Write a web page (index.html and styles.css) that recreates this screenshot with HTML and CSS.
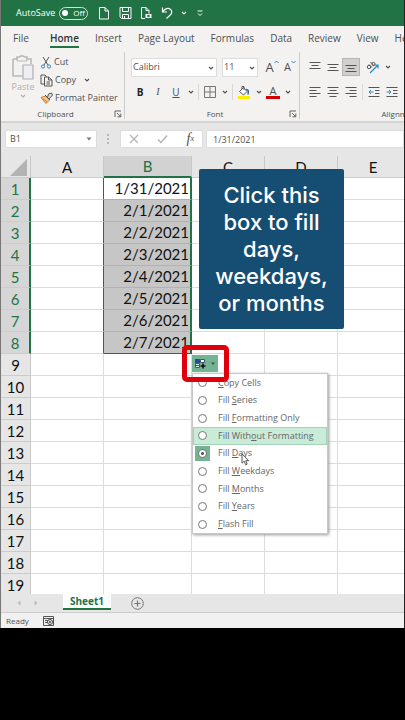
FILE: index.html
```html
<!DOCTYPE html>
<html lang="en">
<head>
<meta charset="utf-8">
<meta name="viewport" content="width=device-width, initial-scale=1">
<title>Sheet1</title>
<link rel="stylesheet" href="styles.css">
</head>
<body>
<svg class="defs" aria-hidden="true">
  <symbol id="chev" viewBox="0 0 6 6"><path d="M1 2l2 2 2-2" fill="none" stroke="currentColor" stroke-width="1.1"/></symbol>
  <symbol id="launch" viewBox="0 0 8 8"><path d="M1 7V1h6M3 3l3.500 3.500M6.800 3.500v3.300H3.500" fill="none" stroke="#555" stroke-width=".9"/></symbol>
</svg>
<main class="app">
  <header class="title">
    <span class="autosave">AutoSave</span>
    <button class="toggle" aria-label="AutoSave off"><i></i>Off</button>
    <button class="tool" aria-label="New"><svg width="12" height="14" viewBox="0 0 12 14"><path d="M1.500 1.500h5.500l3.500 3.500v8h-9zM7 1.500v3.500h3.500" fill="none" stroke="#fff"/></svg></button>
    <button class="tool" aria-label="Save"><svg width="13" height="14" viewBox="0 0 13 14"><path d="M1 1.500h11v11H2.500L1 11zM3.500 1.500v4h6v-4M3.500 12.500v-4h6v4M5.500 10v2.500" fill="none" stroke="#fff"/></svg></button>
    <button class="tool" aria-label="Print preview"><svg width="13" height="14" viewBox="0 0 13 14"><path d="M5 12.500H1.500v-11H6l3 3v3M6 1.500v3h3" fill="none" stroke="#fff"/><path d="M5.500 8h6v4h-6z" fill="#fff"/><circle cx="8.500" cy="10" r="1.300" fill="#217346"/></svg></button>
    <button class="tool" aria-label="Undo"><svg width="13" height="14" viewBox="0 0 13 14"><path d="M1.500 1.500v4.500H6M1.800 5.800C4 2.500 7 1.500 9.300 3.200c2.500 2 1.500 4.500-.3 6L5.500 12.500" fill="none" stroke="#fff" stroke-width="1.200"/></svg></button>
    <button class="more" aria-label="Undo list"><svg width="6" height="6"><use href="#chev"/></svg></button>
    <button class="more custom" aria-label="Customize toolbar"><svg width="6" height="7" viewBox="0 0 6 7"><path d="M.5 1h5M1 3.500l2 2 2-2" fill="none" stroke="#fff"/></svg></button>
  </header>
  <nav class="tabs">
    <a class="file" href="#file">File</a><a class="on" href="#home">Home</a><a href="#insert">Insert</a><a href="#layout">Page Layout</a><a href="#formulas">Formulas</a><a href="#data">Data</a><a href="#review">Review</a><a href="#view">View</a><a href="#help">Help</a>
  </nav>
  <section class="ribbon">
    <div class="group clipboard">
      <div class="clip-body">
        <button class="paste"><svg width="24" height="26" viewBox="0 0 24 26"><path d="M2 4h4V2h2.500C9 .5 13 .5 13.500 2H16v2h4v5M2 4v17h9" fill="none" stroke="#b9b9b9" stroke-width="1.600"/><path d="M6 2v4h10V2" fill="none" stroke="#b9b9b9"/><path d="M12 10h10v14H12z" fill="#eeeef2" stroke="#b0b0b4" stroke-width="1.200"/></svg>Paste<svg width="6" height="6"><use href="#chev"/></svg></button>
        <div class="clip-list">
          <button><svg width="12" height="13" viewBox="0 0 12 13"><path d="M3 1l5 8M9 1L4 9" stroke="#555" fill="none"/><circle cx="3" cy="10.500" r="1.600" fill="none" stroke="#2b88c8"/><circle cx="9" cy="10.500" r="1.600" fill="none" stroke="#2b88c8"/></svg>Cut</button>
          <button><svg width="13" height="13" viewBox="0 0 13 13"><path d="M4 10H1V1h4l1.500 1.500M4.500 3h4L12 6v6H4.500zM8.500 3v3H12M6.500 8h3.500M6.500 10h3.500" fill="none" stroke="#555"/></svg>Copy<svg class="after" width="6" height="6"><use href="#chev"/></svg></button>
          <button><svg width="13" height="12" viewBox="0 0 13 12"><path d="M1 5.500l4.500-1.500 4 4L6 11.500z" fill="#f7c493" stroke="#e07b20"/><path d="M3 6.500l4 3.500" stroke="#e07b20"/><path d="M5 3l5 5M7.500 5.500L8.500 2l3-1 1 2-3.500 4z" fill="#ddd" stroke="#555"/></svg>Format Painter</button>
        </div>
      </div>
      <footer>Clipboard<svg width="8" height="8"><use href="#launch"/></svg></footer>
    </div>
    <div class="group font">
      <div class="row">
        <label class="drop family"><select aria-label="Font"><option>Calibri</option></select><svg width="6" height="6"><use href="#chev"/></svg></label>
        <label class="drop size"><select aria-label="Font size"><option>11</option></select><svg width="6" height="6"><use href="#chev"/></svg></label>
        <button class="grow" aria-label="Increase font size">A<svg width="5" height="4" viewBox="0 0 5 4"><path d="M.5 3l2-2 2 2" fill="none" stroke="#2b88c8"/></svg></button>
        <button class="grow less" aria-label="Decrease font size">A<svg width="5" height="4" viewBox="0 0 5 4"><path d="M.5 1l2 2 2-2" fill="none" stroke="#2b88c8"/></svg></button>
      </div>
      <div class="row">
        <button class="ic b">B</button><button class="ic i">I</button><button class="ic u">U</button><button class="dd" aria-label="Underline styles"><svg width="6" height="6"><use href="#chev"/></svg></button><hr>
        <button class="ic" aria-label="Borders"><svg width="12" height="12" viewBox="0 0 12 12"><path d="M.5.5h11v11H.5zM6 .5v11M.5 6h11" fill="none" stroke="#777"/></svg></button><button class="dd" aria-label="Border list"><svg width="6" height="6"><use href="#chev"/></svg></button><hr>
        <button class="ic" aria-label="Fill color"><svg width="14" height="13" viewBox="0 0 14 13"><path d="M1 10h12v3H1z" fill="#ffed00"/><path d="M2.500 5.500l4-4 3.500 4-3.500 3.500zM5 3V.5h2V4" fill="#fff" stroke="#555"/><path d="M9 3.500c3 0 2.500 2 2 5" fill="none" stroke="#2b6cae" stroke-width="1.500"/></svg></button><button class="dd" aria-label="Fill colors"><svg width="6" height="6"><use href="#chev"/></svg></button>
        <button class="ic color" aria-label="Font color">A</button><button class="dd" aria-label="Font colors"><svg width="6" height="6"><use href="#chev"/></svg></button>
      </div>
      <footer>Font<svg width="8" height="8"><use href="#launch"/></svg></footer>
    </div>
    <div class="group align">
      <div class="row">
        <button class="ic" aria-label="Top align"><svg width="12" height="12" viewBox="0 0 12 12"><path d="M.5 1.500h11M2.500 4.500h7M.5 7.500h11" stroke="#555"/></svg></button>
        <button class="ic" aria-label="Middle align"><svg width="12" height="12" viewBox="0 0 12 12"><path d="M.5 3.500h11M2.500 6.500h7M.5 9.500h11" stroke="#555"/></svg></button>
        <button class="ic pressed" aria-label="Bottom align"><svg width="12" height="12" viewBox="0 0 12 12"><path d="M.5 4.500h11M2.500 7.500h7M.5 10.500h11" stroke="#555"/></svg></button>
        <button class="ic turn" aria-label="Orientation"><svg width="14" height="13" viewBox="0 0 14 13"><path d="M4 12l8-8M8.500 4H12v3.500" fill="none" stroke="#2b88c8" stroke-width="1.200"/><circle cx="3" cy="6" r="1.700" fill="none" stroke="#555"/><path d="M3 3.500l3 3M4.500 1l3.500 4" fill="none" stroke="#555"/><circle cx="7.500" cy="3" r="1.600" fill="none" stroke="#555"/></svg></button><button class="dd" aria-label="Orientation list"><svg width="6" height="6"><use href="#chev"/></svg></button>
      </div>
      <div class="row">
        <button class="ic" aria-label="Align left"><svg width="12" height="12" viewBox="0 0 12 12"><path d="M.5 1.500h11M.5 4.500h7M.5 7.500h11M.5 10.500h7" stroke="#555"/></svg></button>
        <button class="ic" aria-label="Center"><svg width="12" height="12" viewBox="0 0 12 12"><path d="M.5 1.500h11M2.500 4.500h7M.5 7.500h11M2.500 10.500h7" stroke="#555"/></svg></button>
        <button class="ic" aria-label="Align right"><svg width="12" height="12" viewBox="0 0 12 12"><path d="M.5 1.500h11M4.500 4.500h7M.5 7.500h11M4.500 10.500h7" stroke="#555"/></svg></button><hr>
        <button class="ic" aria-label="Decrease indent"><svg width="12" height="12" viewBox="0 0 12 12"><path d="M.5 1.500h11M7 4.500h4.500M7 7.500h4.500M.5 10.500h11" stroke="#555"/><path d="M5.500 6H1M3 4L1 6l2 2" fill="none" stroke="#2b88c8"/></svg></button>
        <button class="ic" aria-label="Increase indent"><svg width="12" height="12" viewBox="0 0 12 12"><path d="M.5 1.500h11M7 4.500h4.500M7 7.500h4.500M.5 10.500h11" stroke="#555"/><path d="M.5 6H5M3 4l2 2-2 2" fill="none" stroke="#2b88c8"/></svg></button>
      </div>
      <footer>Alignment</footer>
    </div>
  </section>
  <section class="formula">
    <label class="name"><input aria-label="Name box" value="B1"><svg width="6" height="4" viewBox="0 0 6 4"><path d="M.5.5h5L3 3.500z" fill="#777"/></svg></label>
    <svg class="dots" width="2" height="10" viewBox="0 0 2 10"><path d="M0 1h2M0 5h2M0 9h2" stroke="#aaa" stroke-width="1.500"/></svg>
    <div class="fx">
      <button aria-label="Cancel"><svg width="10" height="10" viewBox="0 0 10 10"><path d="M1 1l8 8M9 1L1 9" stroke="#b5b5b5" stroke-width="1.300"/></svg></button>
      <button aria-label="Enter"><svg width="11" height="10" viewBox="0 0 11 10"><path d="M1 5.500L4 8.500l6-7" fill="none" stroke="#b5b5b5" stroke-width="1.500"/></svg></button>
      <button class="fn" aria-label="Insert function">f<small>x</small></button>
    </div>
    <input class="value" aria-label="Formula bar" value="1/31/2021">
  </section>
  <section class="sheet">
    <table>
      <colgroup><col class="num"><col class="c"><col class="cb"><col class="c"><col class="c"><col></colgroup>
      <thead><tr><th class="corner"><svg width="18" height="17" viewBox="0 0 18 17"><path d="M17 0v17H0z" fill="#b3b3b3"/></svg></th><th>A</th><th class="sel">B</th><th>C</th><th>D</th><th>E</th></tr></thead>
      <tbody>
        <tr class="in first"><th>1</th><td></td><td>1/31/2021</td><td></td><td></td><td></td></tr>
        <tr class="in"><th>2</th><td></td><td>2/1/2021</td><td></td><td></td><td></td></tr>
        <tr class="in"><th>3</th><td></td><td>2/2/2021</td><td></td><td></td><td></td></tr>
        <tr class="in"><th>4</th><td></td><td>2/3/2021</td><td></td><td></td><td></td></tr>
        <tr class="in"><th>5</th><td></td><td>2/4/2021</td><td></td><td></td><td></td></tr>
        <tr class="in"><th>6</th><td></td><td>2/5/2021</td><td></td><td></td><td></td></tr>
        <tr class="in"><th>7</th><td></td><td>2/6/2021</td><td></td><td></td><td></td></tr>
        <tr class="in last"><th>8</th><td></td><td>2/7/2021</td><td></td><td></td><td></td></tr>
        <tr><th>9</th><td></td><td></td><td></td><td></td><td></td></tr>
        <tr><th>10</th><td></td><td></td><td></td><td></td><td></td></tr>
        <tr><th>11</th><td></td><td></td><td></td><td></td><td></td></tr>
        <tr><th>12</th><td></td><td></td><td></td><td></td><td></td></tr>
        <tr><th>13</th><td></td><td></td><td></td><td></td><td></td></tr>
        <tr><th>14</th><td></td><td></td><td></td><td></td><td></td></tr>
        <tr><th>15</th><td></td><td></td><td></td><td></td><td></td></tr>
        <tr><th>16</th><td></td><td></td><td></td><td></td><td></td></tr>
        <tr><th>17</th><td></td><td></td><td></td><td></td><td></td></tr>
        <tr><th>18</th><td></td><td></td><td></td><td></td><td></td></tr>
        <tr><th>19</th><td></td><td></td><td></td><td></td><td></td></tr>
      </tbody>
    </table>
    <p class="callout">Click this<br>box to fill<br>days,<br>weekdays,<br>or months</p>
    <form class="menu">
      <label><input type="radio" name="fill"><span><u>C</u>opy Cells</span></label>
      <label><input type="radio" name="fill"><span>Fill <u>S</u>eries</span></label>
      <label><input type="radio" name="fill"><span>Fill <u>F</u>ormatting Only</span></label>
      <label class="hover"><input type="radio" name="fill"><span>Fill With<u>o</u>ut Formatting</span></label>
      <label class="picked"><input type="radio" name="fill" checked><span>Fill <u>D</u>ays</span></label>
      <label><input type="radio" name="fill"><span>Fill <u>W</u>eekdays</span></label>
      <label><input type="radio" name="fill"><span>Fill <u>M</u>onths</span></label>
      <label><input type="radio" name="fill"><span>Fill <u>Y</u>ears</span></label>
      <label><input type="radio" name="fill"><span><u>F</u>lash Fill</span></label>
    </form>
    <div class="ring"><button aria-label="Auto fill options"><svg width="26" height="18" viewBox="0 0 26 18"><path d="M3 4h5v4H3z" fill="#1e4e9c"/><path d="M8.500 4.500h4v3h-4z" fill="#fff" stroke="#456"/><path d="M3.500 8.500h4v4h-4zM3 10.500h5" fill="#dfeee6" stroke="#456"/><path d="M11 8.500v5M8.500 11h5" stroke="#111" stroke-width="1.600"/><path d="M19 7.500h4l-2 2.500z" fill="#345c49"/></svg></button></div>
    <svg class="cursor" width="9" height="13" viewBox="0 0 9 13"><path d="M1 .8v9.400l2.200-2 1.500 3.600 1.500-.7-1.500-3.400h3z" fill="#fff" stroke="#444" stroke-width=".9"/></svg>
  </section>
  <nav class="sheets">
    <button class="arrow" aria-label="Previous sheet"><svg width="4" height="6" viewBox="0 0 4 6"><path d="M3.500.5v5L.5 3z" fill="#bbb"/></svg></button>
    <button class="arrow" aria-label="Next sheet"><svg width="4" height="6" viewBox="0 0 4 6"><path d="M.5.5v5L3.500 3z" fill="#bbb"/></svg></button>
    <a href="#sheet1">Sheet1</a>
    <button class="add" aria-label="New sheet"><svg width="13" height="13" viewBox="0 0 13 13"><circle cx="6.500" cy="6.500" r="5.800" fill="none" stroke="#777"/><path d="M6.500 3.500v6M3.500 6.500h6" stroke="#777" stroke-width="1.200"/></svg></button>
  </nav>
  <footer class="status">Ready<svg width="11" height="10" viewBox="0 0 11 10"><path d="M.5.500h10v9H.5zM.5 2.500h10M2 4.500h3M2 6.500h2" fill="none" stroke="#555"/><circle cx="7" cy="6" r="2.500" fill="#eee" stroke="#444"/><circle cx="7" cy="6" r="1" fill="#444"/></svg></footer>
</main>
</body>
</html>
```
FILE: styles.css
```css
* { box-sizing: border-box; }
body { margin: 0; background: #000; color: #505050; font: 9px/12px "Open Sans", "Noto Sans", sans-serif; }
button, input, select { margin: 0; padding: 0; border: 0; background: none; color: inherit; font: inherit; }
button { display: flex; align-items: center; justify-content: center; flex: none; }
svg { display: block; flex: none; }
a { color: inherit; text-decoration: none; }
.defs { display: none; }
.app { border-left: 1px solid #777; border-right: 1px solid #222; background: #e6e6e6; overflow: hidden; }

.title { display: flex; align-items: center; height: 26px; padding-left: 15px; background: #217346; color: #fff; }
.autosave { width: 43px; white-space: nowrap; }
.toggle { width: 29px; height: 13px; gap: 5px; margin-right: 8px; border: 1px solid #cfe3d7; border-radius: 7px; font-size: 8px; }
.toggle i { width: 6px; height: 6px; border-radius: 50%; background: #fff; }
.tool { width: 16px; margin-right: 5px; }
.more { width: 8px; }
.custom { margin-left: 8px; }

.tabs { display: flex; gap: 16px; height: 26px; padding: 4px 0 4px 12px; background: #f3f2f0; font-size: 10px; line-height: 16px; white-space: nowrap; overflow: hidden; }
.tabs a { flex: none; }
.file { width: 21px; }
.on { border-bottom: 2px solid #217346; color: #333; font-weight: 600; }

.ribbon { display: flex; height: 71px; background: #f3f2f0; border-bottom: 2px solid #d4d4d4; overflow: hidden; }
.group { display: flex; flex-direction: column; flex: none; position: relative; height: 67px; border-right: 1px solid #ccc; }
.group footer { display: flex; align-items: center; justify-content: center; margin-top: auto; height: 10px; font-size: 8px; line-height: 10px; }
.group footer svg { position: absolute; right: 2px; bottom: 1px; }
.clipboard { width: 124px; }
.clipboard footer { padding-right: 14px; }
.clip-body { display: flex; gap: 5px; padding: 1px 0 0 10px; }
.paste { flex-direction: column; width: 24px; height: 48px; color: #b0b0b0; }
.clip-list { display: flex; flex-direction: column; }
.clip-list button { justify-content: flex-start; gap: 2px; height: 18px; white-space: nowrap; }
.after { margin-left: 6px; }
.font { width: 175px; padding-left: 6px; }
.row { display: flex; align-items: center; height: 30px; }
.row + .row { height: 20px; }
.drop { position: relative; height: 19px; margin-right: 5px; border: 1px solid #ddd; background: #fff; }
.drop select { width: 100%; height: 17px; padding-left: 1px; appearance: none; }
.drop svg { position: absolute; right: 2px; top: 6px; }
.family { width: 86px; }
.size { width: 36px; }
.grow { align-items: flex-start; width: 18px; font-size: 13px; line-height: 14px; }
.less { font-size: 11px; }
.ic { width: 18px; height: 18px; font-size: 10px; }
.b { font-weight: 700; color: #222; }
.i { font-family: "Liberation Serif", serif; font-style: italic; }
.u { text-decoration: underline; }
.dd { width: 11px; height: 18px; }
.row hr { width: 1px; height: 16px; margin: 0 2px; border: 0; background: #d8d8d8; }
.color { width: 14px; height: 13px; margin: 0 2px; border-bottom: 3px solid #d00000; font-size: 11px; line-height: 10px; }
.align { width: 196px; padding-left: 6px; }
.pressed { background: #cfcfcf; border: 1px solid #b5b5b5; }
.turn { margin-left: 4px; }

.formula { display: flex; align-items: center; height: 33px; padding: 0 0 1px 4px; font-size: 8px; }
.name, .fx, .value { height: 18px; border: 1px solid #ddd; background: #fff; }
.name { display: flex; align-items: center; width: 92px; padding: 0 4px; }
.name input { flex: 1; min-width: 0; font-size: 9px; }
.dots { margin: 0 11px 0 10px; }
.fx { display: flex; align-items: center; justify-content: space-between; width: 83px; padding: 0 8px; }
.fn { font: italic 14px/16px "Liberation Serif", serif; }
.fn small { font-size: 8px; }
.value { flex: 1; min-width: 0; margin-left: 3px; padding-left: 6px; font-size: 9px; }

.sheet { position: relative; height: 438px; overflow: hidden; background: #fff; font-family: Lato, sans-serif; font-size: 15px; line-height: 20px; color: #111; }
table { width: calc(100% + 5px); table-layout: fixed; border-collapse: separate; border-spacing: 0; }
.num { width: 30px; }
.c { width: 73px; }
.cb { width: 88px; }
th { height: 22px; padding: 0; background: #e6e6e6; border-right: 1px solid #c8c8c8; border-bottom: 1px solid #ccc; font-weight: 400; }
td { height: 22px; padding: 0 1px 1px; border-right: 1px solid #dcdcdc; border-bottom: 1px solid #dcdcdc; text-align: right; }
.corner svg { margin: 2px 2px 0 auto; }
.sel { background: #d2d2d2; border-bottom: 2px solid #217346; color: #217346; }
.in th { background: #d6d6d6; border-right: 2px solid #217346; color: #217346; }
.in td:nth-child(2) { border-right-color: #217346; }
.in td:nth-child(3) { background: #c6c6c6; border-right: 2px solid #217346; border-bottom-color: #b2b2b2; }
.first td:nth-child(3) { background: #fff; }
.last td:nth-child(3) { border-bottom-color: #217346; }
.callout { position: absolute; left: 198px; top: 13px; width: 145px; height: 160px; margin: 0; padding-top: 13px; border-radius: 2px; background: #164d73; color: #fff; font: 500 22px/27px Inter, sans-serif; text-align: center; white-space: nowrap; }
.menu { position: absolute; left: 191px; top: 217px; width: 136px; height: 161px; display: grid; grid-auto-rows: 1fr; border: 1px solid #c8c8c8; background: #fff; box-shadow: 1px 1px 3px #999; color: #666; font: 9px/12px "Open Sans", sans-serif; white-space: nowrap; }
.menu label { display: flex; align-items: center; gap: 11px; padding-left: 5px; }
.menu input { appearance: none; width: 9px; height: 9px; border: 1px solid #777; border-radius: 50%; background: #fff; }
.menu input:checked { background: radial-gradient(#555 0 1px, #fff 2px); }
.menu .picked { background: linear-gradient(#74b394, #74b394) 2px 1px / 15px 15px no-repeat; }
.menu .hover { background: #c9ecd9; box-shadow: 0 0 0 1px #a5d3ba inset; }
.ring { position: absolute; left: 181px; top: 189px; width: 47px; height: 37px; padding: 5px; border: 5px solid #e0000c; border-radius: 5px; }
.ring button { width: 26px; height: 17px; background: #74b394; }
.cursor { position: absolute; left: 240px; top: 297px; }

.sheets { display: flex; align-items: flex-start; height: 19px; padding-left: 16px; border-bottom: 1px solid #ccc; }
.arrow { width: 4px; height: 18px; margin-right: 13px; }
.sheets a { width: 48px; height: 16px; margin-left: 12px; border-bottom: 2px solid #217346; background: #fff; color: #217346; font-weight: 700; font-size: 10px; line-height: 14px; text-align: center; }
.add { height: 18px; margin-left: 20px; }
.status { display: flex; align-items: center; gap: 14px; height: 15px; padding-left: 5px; background: #f1f1f1; font-size: 8px; }
```
